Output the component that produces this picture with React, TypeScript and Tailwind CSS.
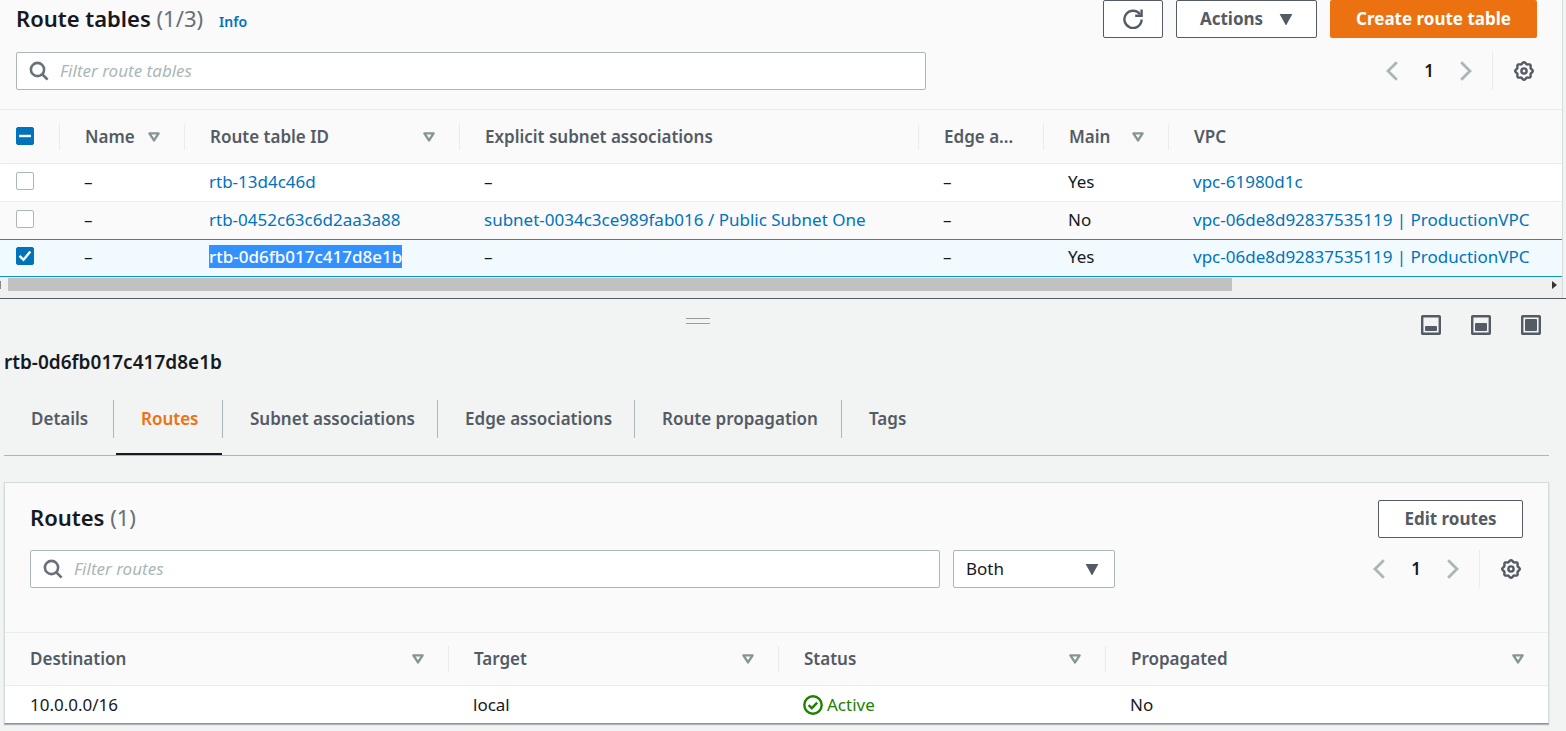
import { useState } from 'react';
import type { ReactNode } from 'react';

const gearPath = (() => {
  const points: string[] = [];
  for (let i = 0; i < 96; i += 1) {
    const a = (i / 96) * Math.PI * 2;
    const r = 8 + 0.8 * Math.cos(8 * a);
    points.push(`${(10 + r * Math.cos(a)).toFixed(2)} ${(10 + r * Math.sin(a)).toFixed(2)}`);
  }
  return `M${points.join('L')}Z`;
})();

function SearchIcon() {
  return (
    <svg viewBox="0 0 20 20" className="h-5 w-5 text-[#687078]" fill="none" stroke="currentColor" strokeWidth="2.6" aria-hidden="true">
      <circle cx="8.5" cy="8.5" r="6.6" />
      <path d="M13 13l5.6 5.6" />
    </svg>
  );
}

function GearIcon() {
  return (
    <svg viewBox="0 0 20 20" className="h-5 w-5" fill="none" stroke="currentColor" strokeWidth="2.4" aria-hidden="true">
      <path d={gearPath} />
      <circle cx="10" cy="10" r="2.6" />
    </svg>
  );
}

function SortIcon() {
  return (
    <svg viewBox="0 0 12 10" className="h-[10px] w-3 shrink-0 text-[#879596]" fill="none" stroke="currentColor" strokeWidth="2.4" strokeLinejoin="round" aria-hidden="true">
      <path d="M1.4 1.4h9.2L6 8.4z" />
    </svg>
  );
}

function CaretIcon() {
  return (
    <svg viewBox="0 0 14 11" className="h-[11px] w-[14px] fill-[#545b64]" aria-hidden="true">
      <path d="M.6 0h12.8L7.6 10.4a.7.7 0 0 1-1.2 0z" />
    </svg>
  );
}

function Chevron({ d }: { d: string }) {
  return (
    <svg viewBox="0 0 12 20" className="h-5 w-3" fill="none" stroke="currentColor" strokeWidth="2.8" aria-hidden="true">
      <path d={d} />
    </svg>
  );
}

function PanelIcon({ top }: { top: number }) {
  return (
    <svg viewBox="0 0 20 20" className="h-5 w-5" aria-hidden="true">
      <rect x="1.2" y="1.2" width="17.6" height="17.6" rx="0.5" fill="none" stroke="#545b64" strokeWidth="2.4" />
      <rect x="4" y={top} width="12" height={16 - top} rx="1" fill="#545b64" />
    </svg>
  );
}

function Pager() {
  return (
    <div className="flex items-center">
      <button aria-label="Previous page" className="text-[#aab7b8]"><Chevron d="M10.8 1.2L2 10l8.8 8.8" /></button>
      <button className="w-[62px] text-center font-semibold text-[#16191f]">1</button>
      <button aria-label="Next page" className="text-[#aab7b8]"><Chevron d="M1.2 1.2L10 10l-8.8 8.8" /></button>
      <div className="ml-5 h-[38px] border-l border-[#eaeded]" />
      <button aria-label="Preferences" className="ml-[21px] text-[#545b64]"><GearIcon /></button>
    </div>
  );
}

function FilterBox({ placeholder }: { placeholder: string }) {
  return (
    <label className="flex h-[38px] w-full max-w-[910px] items-center gap-[11px] rounded-[2px] border border-[#aab7b8] bg-white px-3">
      <SearchIcon />
      <input
        type="text"
        aria-label={placeholder}
        placeholder={placeholder}
        className="min-w-0 flex-1 bg-transparent outline-none placeholder:text-[#aab7b8] placeholder:italic"
      />
    </label>
  );
}

function HeadCell({ children, sort = false, divider = true }: { children: ReactNode; sort?: boolean; divider?: boolean }) {
  return (
    <th scope="col" className="border-t border-[#eaeded] p-0 text-left font-semibold text-[#545b64]">
      <div className={`flex h-[26px] items-center justify-between pr-6 pl-[25px] ${divider ? 'border-r border-[#eaeded]' : ''}`}>
        <span className="whitespace-nowrap">{children}</span>
        {sort && <SortIcon />}
      </div>
    </th>
  );
}

function Check({ checked, mixed = false, label, onChange }: { checked: boolean; mixed?: boolean; label: string; onChange: () => void }) {
  const filled = checked || mixed;
  return (
    <label className="relative mb-[2px] ml-4 block h-[18px] w-[18px]">
      <input
        type="checkbox"
        aria-label={label}
        checked={checked}
        onChange={onChange}
        className={`block h-[18px] w-[18px] appearance-none rounded-[2px] border ${filled ? 'border-[#0073bb] bg-[#0073bb]' : 'border-[#aab7b8] bg-white'}`}
      />
      {filled && (
        <svg viewBox="0 0 18 18" className="pointer-events-none absolute inset-0 h-[18px] w-[18px]" fill="none" stroke="#fff" strokeWidth="2.4" aria-hidden="true">
          <path d={mixed ? 'M3 9h12' : 'M3.5 8.8l4 4L14.3 4.6'} />
        </svg>
      )}
    </label>
  );
}

const tables = [
  { id: 'rtb-13d4c46d', subnet: '', main: 'Yes', vpc: 'vpc-61980d1c' },
  { id: 'rtb-0452c63c6d2aa3a88', subnet: 'subnet-0034c3ce989fab016 / Public Subnet One', main: 'No', vpc: 'vpc-06de8d92837535119 | ProductionVPC' },
  { id: 'rtb-0d6fb017c417d8e1b', subnet: '', main: 'Yes', vpc: 'vpc-06de8d92837535119 | ProductionVPC' },
];

const tabs = [
  { name: 'Details', width: 'w-[110px]' },
  { name: 'Routes', width: 'w-[109px]' },
  { name: 'Subnet associations', width: 'w-[215px]' },
  { name: 'Edge associations', width: 'w-[197px]' },
  { name: 'Route propagation', width: 'w-[207px]' },
  { name: 'Tags', width: 'w-[120px]' },
];

const outlined = 'flex h-[38px] items-center justify-center rounded-[2px] border border-[#545b64] bg-white font-bold text-[#545b64]';

function RouteTables() {
  const [selected, setSelected] = useState(2);
  return (
    <section className="mr-[3px] border-r border-[#d5dbdb] bg-[#fafafa]">
      <header className="flex items-start justify-between pr-[25px] pl-4">
        <div className="flex items-baseline gap-4">
          <h1 className="text-[22px] leading-9 font-semibold text-[#16191f]">
            Route tables <span className="font-normal text-[#687078]">(1/3)</span>
          </h1>
          <a href="#info" className="text-sm font-semibold text-[#0073bb]">Info</a>
        </div>
        <div className="flex gap-[13px]">
          <button aria-label="Refresh" className={`${outlined} w-[60px]`}>
            <svg viewBox="0 0 20 20" className="h-5 w-5" fill="none" stroke="currentColor" strokeWidth="2.4" aria-hidden="true">
              <path d="M18.6 10.5A8.6 8.6 0 1 1 17 5.4" />
              <path d="M18.6.6v6.2h-6.4" />
            </svg>
          </button>
          <button className={`${outlined} w-[141px] gap-4`}>Actions <CaretIcon /></button>
          <button className="h-[38px] w-[207px] rounded-[2px] bg-[#ec7211] font-bold text-white">Create route table</button>
        </div>
      </header>
      <div className="flex items-center justify-between gap-6 pt-[14px] pr-7 pb-[19px] pl-4">
        <FilterBox placeholder="Filter route tables" />
        <Pager />
      </div>
      <table className="w-full table-fixed border-separate border-spacing-0 whitespace-nowrap">
        <colgroup>
          <col className="w-[60px]" />
          <col className="w-[125px]" />
          <col className="w-[275px]" />
          <col className="w-[459px]" />
          <col className="w-[125px]" />
          <col className="w-[125px]" />
          <col />
        </colgroup>
        <thead>
          <tr className="h-[54px]">
            <th scope="col" className="border-t border-[#eaeded] p-0">
              <div className="flex h-[26px] items-center border-r border-[#eaeded]">
                <Check checked={false} mixed label="Select all" onChange={() => setSelected(2)} />
              </div>
            </th>
            <HeadCell sort>Name</HeadCell>
            <HeadCell sort>Route table ID</HeadCell>
            <HeadCell>Explicit subnet associations</HeadCell>
            <HeadCell>Edge a...</HeadCell>
            <HeadCell sort>Main</HeadCell>
            <HeadCell divider={false}>VPC</HeadCell>
          </tr>
        </thead>
        <tbody>
          {tables.map((row, i) => {
            const on = i === selected;
            const cell = on ? 'border-y border-[#0a95c4] bg-[#f1faff] pb-[2px] pl-6' : `border-t border-[#eaeded] pb-[2px] pl-6 ${i === 1 ? 'bg-[#fafafa]' : 'bg-white'}`;
            return (
              <tr key={row.id} className="h-[38px] text-[#16191f]">
                <td className={`${cell} pl-0!`}>
                  <Check checked={on} label={`Select ${row.id}`} onChange={() => setSelected(i)} />
                </td>
                <td className={cell}>–</td>
                <td className={cell}>
                  <a href={`#${row.id}`} className={on ? 'bg-[#3390ff] font-medium text-white' : 'text-[#0073bb]'}>{row.id}</a>
                </td>
                <td className={cell}>{row.subnet ? <a href="#subnet" className="text-[#0073bb]">{row.subnet}</a> : '–'}</td>
                <td className={cell}>–</td>
                <td className={cell}>{row.main}</td>
                <td className={cell}><a href="#vpc" className="text-[#0073bb]">{row.vpc}</a></td>
              </tr>
            );
          })}
        </tbody>
      </table>
      <div className="flex items-center bg-[#f0f0f0] pt-px pb-[7px]">
        <div className="h-2 w-px bg-[#888888]" />
        <div className="ml-[7px] h-[13px] w-47/60 bg-[#c1c1c1]" />
        <svg viewBox="0 0 5 8" className="mr-[5px] ml-auto h-2 w-[5px] fill-[#333333]" aria-hidden="true"><path d="M0 0l5 4-5 4z" /></svg>
      </div>
    </section>
  );
}

function RoutesCard() {
  return (
    <section className="border border-[#d5dbdb] border-b-[#879596] bg-[#fafafa] shadow-[0_1px_1px_#aab7b8]">
      <header className="flex items-start justify-between pt-[17px] pr-[25px] pl-[25px]">
        <h2 className="text-[22px] leading-[34px] font-semibold text-[#16191f]">
          Routes <span className="font-normal text-[#687078]">(1)</span>
        </h2>
        <button className={`${outlined} w-[145px]`}>Edit routes</button>
      </header>
      <div className="flex items-center justify-between gap-6 pt-3 pr-[27px] pb-11 pl-[25px]">
        <div className="flex flex-1 gap-[13px]">
          <FilterBox placeholder="Filter routes" />
          <div className="relative">
            <select aria-label="Route type" className="h-[38px] w-[162px] appearance-none rounded-[2px] border border-[#aab7b8] bg-white pl-3 text-[#16191f]">
              <option>Both</option>
            </select>
            <div className="pointer-events-none absolute top-[14px] right-4"><CaretIcon /></div>
          </div>
        </div>
        <Pager />
      </div>
      <table className="w-full table-fixed border-separate border-spacing-0">
        <colgroup>
          <col className="w-[444px]" />
          <col className="w-[330px]" />
          <col className="w-[327px]" />
          <col />
        </colgroup>
        <thead>
          <tr className="h-[53px]">
            <HeadCell sort>Destination</HeadCell>
            <HeadCell sort>Target</HeadCell>
            <HeadCell sort>Status</HeadCell>
            <HeadCell sort divider={false}>Propagated</HeadCell>
          </tr>
        </thead>
        <tbody>
          <tr className="h-[38px] bg-white text-[#16191f]">
            <td className="border-t border-[#eaeded] pl-[25px]">10.0.0.0/16</td>
            <td className="border-t border-[#eaeded] pl-6">local</td>
            <td className="border-t border-[#eaeded] pl-6">
              <span className="flex items-center gap-1 text-[#1d8102]">
                <svg viewBox="0 0 20 20" className="h-5 w-5" fill="none" stroke="currentColor" strokeWidth="2.4" aria-hidden="true">
                  <circle cx="10" cy="10" r="8.7" />
                  <path d="M5.6 10.2l3.2 3L14.2 7.6" />
                </svg>
                Active
              </span>
            </td>
            <td className="border-t border-[#eaeded] pl-6">No</td>
          </tr>
        </tbody>
      </table>
    </section>
  );
}

export default function App() {
  return (
    <main className="min-h-screen bg-[#f2f3f3] font-['Noto_Sans',sans-serif] text-[17px] leading-6">
      <RouteTables />
      <section className="border-t border-[#545b64] pr-[17px] pl-1">
        <div className="grid grid-cols-3 items-start pt-4 pr-2">
          <span />
          <button aria-label="Resize panel" className="mt-[3px] -ml-37 h-[6px] w-6 justify-self-center border-y border-[#9a9a9a]" />
          <div className="flex justify-end gap-[30px]">
            <button aria-label="Small panel"><PanelIcon top={11} /></button>
            <button aria-label="Medium panel"><PanelIcon top={8} /></button>
            <button aria-label="Full panel"><PanelIcon top={4} /></button>
          </div>
        </div>
        <h2 className="pt-[15px] text-[19px] leading-6 font-semibold text-[#16191f]">rtb-0d6fb017c417d8e1b</h2>
        <nav className="mt-[26px] mb-[26px] flex border-b border-[#aab7b8]" role="tablist">
          {tabs.map((tab, i) => {
            const active = tab.name === 'Routes';
            return (
              <button
                key={tab.name}
                role="tab"
                aria-selected={active}
                className={`${tab.width} flex flex-col whitespace-nowrap font-semibold ${active ? 'text-[#ec7211]' : 'text-[#545b64]'}`}
              >
                <span className={`flex h-[38px] w-full items-center pl-[27px] ${i < 5 ? 'border-r border-[#aab7b8]' : ''}`}>{tab.name}</span>
                <span className="mt-[15px] h-[2px] w-full pr-px pl-[2px]">
                  {active && <span className="block h-full bg-[#16191f]" />}
                </span>
              </button>
            );
          })}
        </nav>
        <RoutesCard />
      </section>
    </main>
  );
}
